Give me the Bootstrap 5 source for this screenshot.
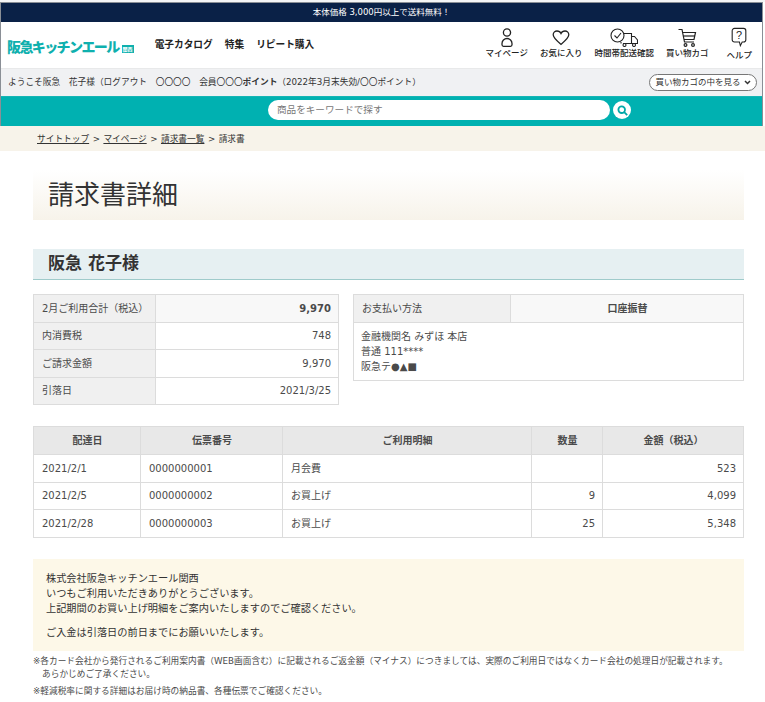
<!DOCTYPE html>
<html lang="ja">
<head>
<meta charset="utf-8">
<title>請求書詳細</title>
<link rel="stylesheet" href="https://cdn.jsdelivr.net/npm/bootstrap@5.3.0/dist/css/bootstrap.min.css">
<style>
html,body{background:#fff}
body{font-family:"DejaVu Sans","Noto Sans CJK JP",sans-serif;font-size:10px;color:#333;line-height:1.4}
.top-gap{height:2px;background:#f4f5f6}
.head-shell{width:763px;border:solid #8a8f96;border-width:1px 1px 0 1px}
.ship-bar{height:19px;background:#0a2147;color:#fff;font-size:8.500px;line-height:19px;text-align:center}
.head-main{height:46px;padding:0 10px 0 6px}
.logo-text{font-size:14px;font-weight:900;color:#0fb0ae;letter-spacing:-1.600px;line-height:1;margin-top:3px;white-space:nowrap}
.logo-tag{font-size:5px;background:#0fb0ae;color:#fff;padding:1px;margin-left:3px;font-weight:700;letter-spacing:0;vertical-align:1px}
.main-nav{gap:12px;margin-left:21px;font-size:9.700px;font-weight:700;color:#222;margin-top:-1px}
.tool-set{margin-left:auto;align-self:flex-start;padding-top:5px;gap:12px}
.tool-item{font-size:8.500px;color:#222;font-weight:500;text-align:center;white-space:nowrap;line-height:1.1}
.tool-item svg{display:block;margin:0 auto 2px}
.tool-help{margin-left:6px}
.help-word{margin-top:4px}
.user-bar{height:28px;background:#f0f1f3;border-top:1px solid #e8e9ea;padding:0 5px 0 7px;font-size:8.700px;color:#333}
.cart-pill{border:1px solid #777;border-radius:10px;height:17px;width:108px;font-size:8.500px;background:#fff;color:#333;gap:3px}
.search-band{height:30px;background:#00b1b1;border-top:1px solid #15b5b5;padding:3px 0 0 267px;gap:3px}
.search-field{width:342px;height:20px;border-radius:10px;background:#fff;color:#777;font-size:9.600px;line-height:20px;padding-left:9px}
.search-btn{width:18px;height:18px;margin-top:1px;border-radius:50%;background:#fff}
.crumb-bar{height:25px;background:#f7f3ea;font-size:8.700px;line-height:27px;padding-left:37px;color:#333}
.crumb-bar a{color:#333;text-decoration:underline}
.crumb-bar i{font-style:normal;margin:0 3.500px}
.page-wrap{padding:0 21px 0 33px}
.title-band{margin-top:19px;height:50px;background:linear-gradient(#fff,#f7f3ea);padding-left:15px}
.title-band h1{font-size:26px;font-weight:400;line-height:50px;margin:0;color:#333}
.name-band{margin-top:29px;height:31px;background:#e6f0f2;border-bottom:1px solid #9fcbcb;padding-left:15px}
.name-band h2{font-size:17px;font-weight:700;line-height:28px;margin:0;color:#333}
.sum-row{margin-top:14px;gap:14px;align-items:flex-start}
.info-tbl{border-collapse:collapse;margin:0;table-layout:fixed;color:#4a4a4a}
.info-tbl th,.info-tbl td{border:1px solid #dcdcdc;height:27.500px;padding:1px 7px 0 8px;vertical-align:middle;font-weight:400;font-size:10px;box-shadow:none;white-space:nowrap}
.info-tbl th.lab{background:#f0f0f0}
.sum-box{width:306px}
.pay-box{width:391px}
.sum-box td{text-align:right}
.total-strong td{background:#f8f8f8;font-weight:700}
.info-tbl td.pay-note{line-height:15px;padding:6px 8px 6px 7px}
.bill-tbl{margin-top:21px;width:711px}
.info-tbl.bill-tbl thead th{background:#e8e8e8;text-align:center;font-weight:700;height:28px;padding-top:0}
.bill-tbl td{height:27.500px}
.note-box{margin-top:21px;height:92px;background:#fdf8e8;padding:12px 13px 0;line-height:15.400px;color:#333;font-size:10.200px}
.note-box p{margin:0}
.note-box p.note-gap{margin-top:8.500px}
.fine-print{font-size:8.700px;line-height:13.500px;color:#4a4a4a;margin-top:4px}
.fine-print p{margin:0 0 3px;padding-left:9px;text-indent:-9px}
</style>
</head>
<body>
<div class="top-gap"></div>
<div class="head-shell">
  <div class="ship-bar">本体価格 3,000円以上で送料無料！</div>
  <div class="head-main d-flex align-items-center">
    <div class="logo-text">阪急キッチンエール<span class="logo-tag">関西</span></div>
    <div class="main-nav d-flex"><span>電子カタログ</span><span>特集</span><span>リピート購入</span></div>
    <div class="tool-set d-flex">
      <div class="tool-item">
        <svg width="14" height="20" viewBox="0 0 14 20" fill="none" stroke="#222" stroke-width="1.300"><circle cx="7" cy="5.500" r="3.600"/><path d="M3.500 19.300h7a1.500 1.500 0 0 0 1.500-1.500v-1.300c0-2.700-2.200-5-5-5s-5 2.300-5 5v1.300a1.500 1.500 0 0 0 1.500 1.500z"/></svg>マイページ</div>
      <div class="tool-item">
        <svg width="18" height="20" viewBox="0 0 18 20" fill="none" stroke="#222" stroke-width="1.300"><path d="M9 17.300C5 14 1.200 11 1.200 7.800 1.200 5.300 3.200 4 5 4 6.900 4 8.300 5 9 6.500 9.700 5 11.100 4 13 4 14.800 4 16.800 5.300 16.800 7.800 16.800 11 13 14 9 17.300z"/></svg>お気に入り</div>
      <div class="tool-item">
        <svg width="28" height="20" viewBox="0 0 28 20" fill="none" stroke="#222" stroke-width="1.100"><circle cx="7.500" cy="8.500" r="6.500"/><path d="M4.500 8.500l2.500 2.500 4-5"/><path d="M13.500 6.500h8v10h-8.500M21.500 9.500h3l3 3.500v3.500h-6"/><path d="M11 15v1.500"/><circle cx="14.500" cy="18" r="1.500"/><circle cx="24" cy="18" r="1.500"/></svg>時間帯配送確認</div>
      <div class="tool-item">
        <svg width="20" height="20" viewBox="0 0 20 20" fill="none" stroke="#222" stroke-width="1.200"><path d="M1.500 2.500h3.500l2.500 12.500h9.500"/><path d="M5.400 5.500h13.100l-1.500 7H7"/><path d="M6.200 9h11.800"/><circle cx="8.500" cy="18" r="1.400"/><circle cx="16" cy="18" r="1.400"/></svg>買い物カゴ</div>
      <div class="tool-item tool-help">
        <svg width="18" height="20" viewBox="0 0 18 22" fill="none" stroke="#222" stroke-width="1.200"><path d="M4 1.500h10a2.500 2.500 0 0 1 2.500 2.500v10a2.500 2.500 0 0 1-2.500 2.500h-1.500l-2 4-1-4H4A2.500 2.500 0 0 1 1.500 14V4A2.500 2.500 0 0 1 4 1.500z"/><text x="9" y="13.500" font-size="12" text-anchor="middle" fill="#222" stroke="none" font-family="Liberation Sans">?</text></svg><div class="help-word">ヘルプ</div></div>
    </div>
  </div>
  <div class="user-bar d-flex align-items-center justify-content-between">
    <div>ようこそ阪急　花子様（ログアウト　〇〇〇〇　会員〇〇〇<b>ポイント</b>（2022年3月末失効/〇〇ポイント）</div>
    <div class="cart-pill d-flex align-items-center justify-content-center">買い物カゴの中を見る<svg width="7" height="5" viewBox="0 0 7 5" fill="none" stroke="#333" stroke-width="1.500"><path d="M1 1l2.500 2.500L6 1"/></svg></div>
  </div>
  <div class="search-band d-flex">
    <div class="search-field">商品をキーワードで探す</div>
    <div class="search-btn d-flex align-items-center justify-content-center">
      <svg width="11" height="11" viewBox="0 0 11 11" fill="none" stroke="#00a9a9" stroke-width="1.800"><circle cx="4.700" cy="4.700" r="3.300"/><path d="M7.200 7.200l3 3"/></svg>
    </div>
  </div>
</div>
<div class="crumb-bar"><a href="#">サイトトップ</a><i>&gt;</i><a href="#">マイページ</a><i>&gt;</i><a href="#">請求書一覧</a><i>&gt;</i>請求書</div>
<div class="page-wrap">
  <div class="title-band"><h1>請求書詳細</h1></div>
  <div class="name-band"><h2>阪急 花子様</h2></div>
  <div class="sum-row d-flex">
    <table class="table info-tbl sum-box">
      <colgroup><col style="width:122px"><col></colgroup>
      <tr class="total-strong"><th class="lab">2月ご利用合計（税込）</th><td>9,970</td></tr>
      <tr><th class="lab">内消費税</th><td>748</td></tr>
      <tr><th class="lab">ご請求金額</th><td>9,970</td></tr>
      <tr><th class="lab">引落日</th><td>2021/3/25</td></tr>
    </table>
    <table class="table info-tbl pay-box">
      <colgroup><col style="width:157px"><col></colgroup>
      <tr class="total-strong"><th class="lab">お支払い方法</th><td class="text-center">口座振替</td></tr>
      <tr><td colspan="2" class="pay-note">金融機関名 みずほ 本店<br>普通 111****<br>阪急テ●▲■</td></tr>
    </table>
  </div>
  <table class="table info-tbl bill-tbl">
    <colgroup><col style="width:107px"><col style="width:142px"><col style="width:249px"><col style="width:71px"><col></colgroup>
    <thead><tr><th>配達日</th><th>伝票番号</th><th>ご利用明細</th><th>数量</th><th>金額（税込）</th></tr></thead>
    <tbody>
      <tr><td>2021/2/1</td><td>0000000001</td><td>月会費</td><td></td><td class="text-end">523</td></tr>
      <tr><td>2021/2/5</td><td>0000000002</td><td>お買上げ</td><td class="text-end">9</td><td class="text-end">4,099</td></tr>
      <tr><td>2021/2/28</td><td>0000000003</td><td>お買上げ</td><td class="text-end">25</td><td class="text-end">5,348</td></tr>
    </tbody>
  </table>
  <div class="note-box">
    <p>株式会社阪急キッチンエール関西</p>
    <p>いつもご利用いただきありがとうございます。</p>
    <p>上記期間のお買い上げ明細をご案内いたしますのでご確認ください。</p>
    <p class="note-gap">ご入金は引落日の前日までにお願いいたします。</p>
  </div>
  <div class="fine-print">
    <p>※各カード会社から発行されるご利用案内書（WEB画面含む）に記載されるご返金額（マイナス）につきましては、実際のご利用日ではなくカード会社の処理日が記載されます。<br>あらかじめご了承ください。</p>
    <p>※軽減税率に関する詳細はお届け時の納品書、各種伝票でご確認ください。</p>
  </div>
</div>
</body>
</html>
